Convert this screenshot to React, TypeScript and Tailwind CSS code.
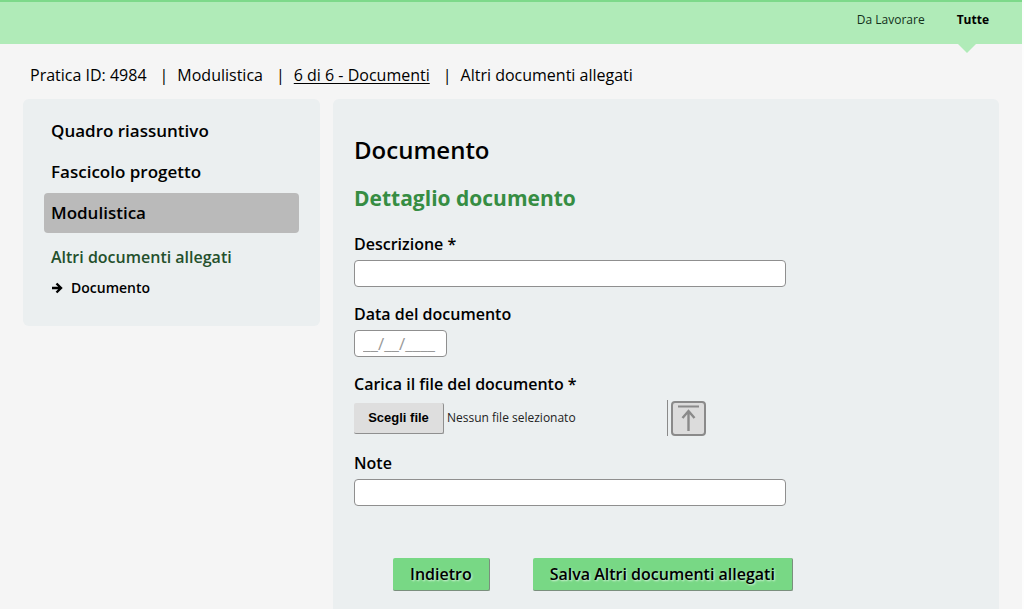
import { useRef, useState } from 'react';
import type { ReactNode } from 'react';

const menuItems = [
  { label: 'Quadro riassuntivo', active: false },
  { label: 'Fascicolo progetto', active: false },
  { label: 'Modulistica', active: true },
];

const TopBar = () => (
  <header className="h-11 border-t-2 border-[#7dd98a] bg-[#b0ebb8]">
    <nav className="flex h-full justify-end gap-8 pr-[33px] text-[12px] leading-9 text-[#12301a]">
      <a href="#da-lavorare">Da Lavorare</a>
      <a href="#tutte" className="relative font-bold text-black">
        Tutte
        <svg className="absolute top-full left-px" width="18" height="9" viewBox="0 0 18 9" aria-hidden="true">
          <path d="M0 0h18L9 9z" fill="#b0ebb8" />
        </svg>
      </a>
    </nav>
  </header>
);

const Separator = () => <span className="pl-1">|</span>;

const Breadcrumb = () => (
  <nav className="flex gap-[9px] px-[30px] pt-[19px] pb-3 text-[16px] leading-6 text-black">
    <span>Pratica ID: 4984</span>
    <Separator />
    <span>Modulistica</span>
    <Separator />
    <a href="#documenti" className="underline underline-offset-2">6 di 6 - Documenti</a>
    <Separator />
    <span>Altri documenti allegati</span>
  </nav>
);

const Sidebar = () => (
  <aside className="w-[297px] shrink-0 self-start rounded-md bg-[#ebeff0] px-[21px] pt-3 pb-[26px]">
    <ul className="flex flex-col gap-px">
      {menuItems.map((item) => (
        <li key={item.label}>
          <a
            href="#menu"
            className={`block rounded px-[7px] text-[17px] leading-10 font-semibold text-black ${item.active ? 'bg-[#bababa]' : ''}`}
          >
            {item.label}
          </a>
        </li>
      ))}
    </ul>
    <div className="px-[7px]">
      <p className="mt-3 text-[16px] leading-6 font-semibold text-[#24502c]">Altri documenti allegati</p>
      <a href="#documento" className="mt-[7px] flex items-center gap-2 text-[14px] leading-6 font-semibold text-black">
        <svg width="12" height="12" viewBox="0 0 12 12" fill="none" stroke="currentColor" strokeWidth="2.4" aria-hidden="true">
          <path d="M1 6h9M5.500 1.500L10 6L5.500 10.500" />
        </svg>
        Documento
      </a>
    </div>
  </aside>
);

interface FieldProps {
  id: string;
  label: string;
  children: ReactNode;
}

const Field = ({ id, label, children }: FieldProps) => (
  <div className="flex flex-col items-start gap-1">
    <label htmlFor={id} className="text-[16px] leading-6 font-semibold text-black">
      {label}
    </label>
    {children}
  </div>
);

const FileUpload = () => {
  const fileInput = useRef<HTMLInputElement>(null);
  const [fileName, setFileName] = useState('');

  return (
    <div className="flex w-[352px] items-center">
      <button
        type="button"
        onClick={() => fileInput.current?.click()}
        className="h-[31px] w-[90px] shrink-0 rounded-xs border-r border-b border-[#8f8f8f] bg-[#dedede] font-['Liberation_Sans',sans-serif] text-[13px] font-bold text-black"
      >
        Scegli file
      </button>
      <span className="flex-1 truncate pl-[3px] text-[12px] text-[#222]">{fileName || 'Nessun file selezionato'}</span>
      <input
        id="file"
        ref={fileInput}
        type="file"
        className="hidden"
        onChange={(e) => setFileName(e.target.files?.[0]?.name ?? '')}
      />
      <div className="border-l border-[#8a8a8a] pl-[3px]">
        <button type="button" aria-label="Carica" className="block">
          <svg width="35" height="36" viewBox="0 0 35 36" fill="none" stroke="#8a8a8a" aria-hidden="true">
            <rect x="1" y="2" width="33" height="33" rx="3" fill="#dcdcdc" strokeWidth="2" />
            <path d="M7 6.500h21" strokeWidth="2" />
            <path d="M17.500 31V11M11.500 18l6-7 6 7" strokeWidth="2.400" />
          </svg>
        </button>
      </div>
    </div>
  );
};

const inputClass = 'h-[27px] rounded border border-[#8f8f8f] bg-white px-2 text-[16px]';
const buttonClass =
  'h-[33px] rounded-xs border-r border-b border-[#7a8f7d] bg-[#78d885] px-[17px] text-[16px] font-semibold text-black [text-shadow:1px_1px_2px_#d8f5dc]';

const DocumentForm = () => (
  <main className="flex-1 rounded-t-md bg-[#ebeff0] px-[21px] pt-[35px] pb-[18px]">
    <h1 className="text-[24px] leading-8 font-semibold text-black">Documento</h1>
    <h2 className="mt-4 text-[21px] leading-8 font-bold text-[#368d43]">Dettaglio documento</h2>
    <form className="mt-[18px]" onSubmit={(e) => e.preventDefault()}>
      <div className="flex flex-col gap-[15px]">
        <Field id="descrizione" label="Descrizione *">
          <input id="descrizione" type="text" className={`${inputClass} w-full max-w-[432px]`} />
        </Field>
        <Field id="data" label="Data del documento">
          <input
            id="data"
            type="text"
            placeholder="__/__/____"
            className={`${inputClass} w-[93px] placeholder:text-[17px] placeholder:text-[#999]`}
          />
        </Field>
        <Field id="file" label="Carica il file del documento *">
          <FileUpload />
        </Field>
        <Field id="note" label="Note">
          <input id="note" type="text" className={`${inputClass} w-full max-w-[432px]`} />
        </Field>
      </div>
      <div className="mt-[52px] flex gap-[43px] pl-[39px]">
        <button type="button" className={buttonClass}>Indietro</button>
        <button type="submit" className={buttonClass}>Salva Altri documenti allegati</button>
      </div>
    </form>
  </main>
);

const App = () => (
  <div className="min-h-screen border-r-2 border-[#fdfdfd] bg-[#f5f5f5] font-['Open_Sans','Noto_Sans',sans-serif]">
    <TopBar />
    <Breadcrumb />
    <div className="flex gap-[13px] px-[23px]">
      <Sidebar />
      <DocumentForm />
    </div>
  </div>
);

export default App;
